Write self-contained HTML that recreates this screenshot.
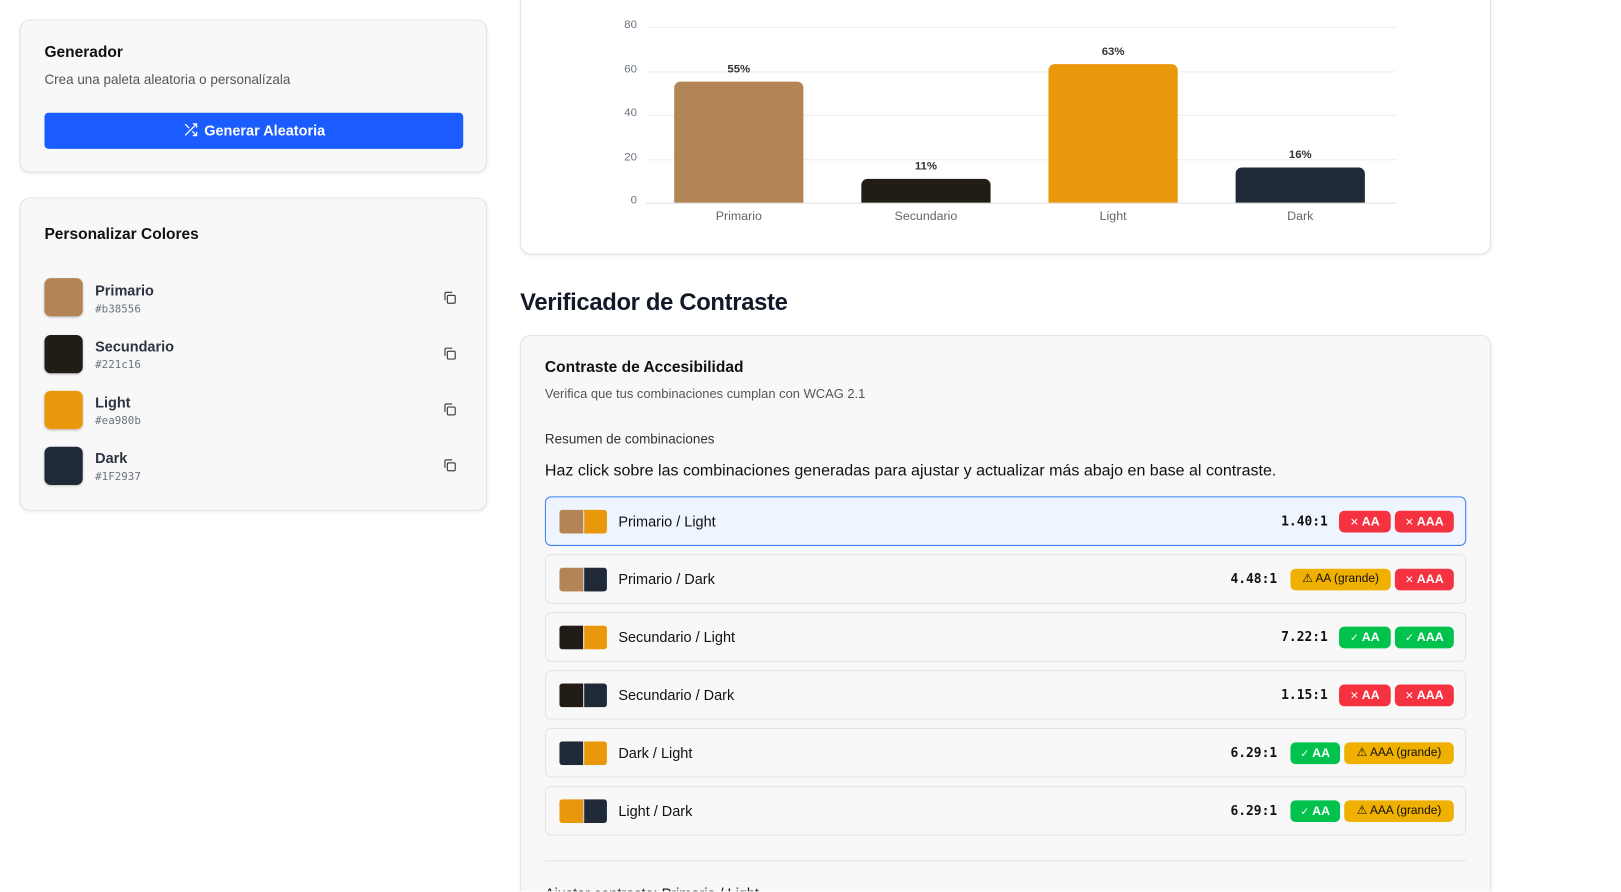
<!DOCTYPE html>
<html><head><meta charset="utf-8"><style>
html,body{margin:0;padding:0;width:1621px;height:892px;overflow:hidden;background:#fff;font-family:"Liberation Sans",sans-serif;}
#clip{position:absolute;left:0;top:0;width:1621px;height:892px;overflow:hidden;}
#w{position:absolute;left:0;top:0;width:1568px;height:862px;overflow:hidden;transform:scale(1.034);transform-origin:0 0;}
.a{position:absolute;}
.card{position:absolute;background:#f8f8f8;border:1px solid #e4e4e4;border-radius:10px;box-shadow:0 1px 3px rgba(0,0,0,.08);box-sizing:border-box;}
.t{position:absolute;white-space:nowrap;}
.sw{position:absolute;width:37px;height:37px;border-radius:6px;box-shadow:0 1px 2px rgba(0,0,0,.2);}
.nm{font-size:14px;font-weight:bold;color:#2d3340;}
.hx{font-family:"DejaVu Sans Mono",monospace;font-size:10.5px;color:#6b7280;}
.row{position:absolute;left:527px;width:891px;height:48px;box-sizing:border-box;border:1px solid #e3e3e3;border-radius:6px;background:#f8f8f8;}
.pair{position:absolute;left:13px;top:12px;width:46px;height:23px;border-radius:3px;overflow:hidden;display:flex;}
.pair span{flex:1;}
.pair span+span{border-left:1px solid #ddd;}
.lb{position:absolute;left:70px;top:15px;font-size:14px;color:#111;}
.rt{position:absolute;top:15px;font-family:"DejaVu Sans Mono",monospace;font-weight:bold;font-size:12.5px;color:#111;}
.bd{position:absolute;top:13px;height:21px;border-radius:5px;font-size:12px;line-height:21px;text-align:center;color:#fff;font-weight:bold;}
.bd i{font-style:normal;font-weight:normal;font-size:10px;margin-right:3px;}
.r{background:#f5323f;}.g{background:#00c24d;}.y{background:#f0b000;color:#111;font-weight:normal;font-size:11.5px;}
.yl{font-size:11px;color:#6b7280;text-align:right;width:20px;}
.bar{position:absolute;width:125px;border-radius:6px 6px 0 0;}
.vl{position:absolute;width:125px;text-align:center;font-size:11px;font-weight:bold;color:#333;}
.cl{position:absolute;width:125px;text-align:center;font-size:12px;color:#666;top:202px;}
</style></head><body><div id="clip"><div id="w">

<div class="card" style="left:19px;top:19px;width:452px;height:148px;">
 <div class="t" style="left:23px;top:22px;font-size:15px;font-weight:bold;color:#111;">Generador</div>
 <div class="t" style="left:23px;top:49px;font-size:13px;color:#555;">Crea una paleta aleatoria o personalízala</div>
 <div class="a" style="left:23px;top:89px;width:405px;height:35px;background:#1a5cff;border-radius:4px;color:#fff;font-size:14px;font-weight:bold;text-align:center;line-height:35px;">
  <svg width="15" height="15" viewBox="0 0 24 24" fill="none" stroke="#fff" stroke-width="2" stroke-linecap="round" stroke-linejoin="round" style="vertical-align:-2px;margin-right:6px"><path d="M16 3h5v5M4 20L21 3M21 16v5h-5M15 15l6 6M4 4l5 5"/></svg>Generar Aleatoria</div>
</div>

<div class="card" style="left:19px;top:191px;width:452px;height:303px;">
 <div class="t" style="left:23px;top:26px;font-size:15px;font-weight:bold;color:#111;">Personalizar Colores</div>
</div>
<div class="sw" style="left:43px;top:269px;background:#b38556"></div>
<div class="t nm" style="left:92px;top:273px">Primario</div><div class="t hx" style="left:92px;top:293px">#b38556</div>
<div class="sw" style="left:43px;top:324px;background:#221c16"></div>
<div class="t nm" style="left:92px;top:327px">Secundario</div><div class="t hx" style="left:92px;top:347px">#221c16</div>
<div class="sw" style="left:43px;top:378px;background:#ea980b"></div>
<div class="t nm" style="left:92px;top:381px">Light</div><div class="t hx" style="left:92px;top:401px">#ea980b</div>
<div class="sw" style="left:43px;top:432px;background:#1f2937"></div>
<div class="t nm" style="left:92px;top:435px">Dark</div><div class="t hx" style="left:92px;top:455px">#1F2937</div>
<svg class="a" style="left:428px;top:281px" width="14" height="14" viewBox="0 0 24 24" fill="none" stroke="#444" stroke-width="2"><rect x="8" y="8" width="13" height="13" rx="2"/><path d="M4 16V5a2 2 0 0 1 2-2h10"/></svg>
<svg class="a" style="left:428px;top:335px" width="14" height="14" viewBox="0 0 24 24" fill="none" stroke="#444" stroke-width="2"><rect x="8" y="8" width="13" height="13" rx="2"/><path d="M4 16V5a2 2 0 0 1 2-2h10"/></svg>
<svg class="a" style="left:428px;top:389px" width="14" height="14" viewBox="0 0 24 24" fill="none" stroke="#444" stroke-width="2"><rect x="8" y="8" width="13" height="13" rx="2"/><path d="M4 16V5a2 2 0 0 1 2-2h10"/></svg>
<svg class="a" style="left:428px;top:443px" width="14" height="14" viewBox="0 0 24 24" fill="none" stroke="#444" stroke-width="2"><rect x="8" y="8" width="13" height="13" rx="2"/><path d="M4 16V5a2 2 0 0 1 2-2h10"/></svg>

<div class="card" style="left:503px;top:-12px;width:939px;height:258px;background:#fff;"></div>
<div class="t yl" style="left:596px;top:18px">80</div>
<div class="t yl" style="left:596px;top:61px">60</div>
<div class="t yl" style="left:596px;top:103px">40</div>
<div class="t yl" style="left:596px;top:146px">20</div>
<div class="t yl" style="left:596px;top:188px">0</div>
<div class="a" style="left:625px;top:26px;width:725px;height:1px;background:#eee"></div>
<div class="a" style="left:625px;top:69px;width:725px;height:1px;background:#eee"></div>
<div class="a" style="left:625px;top:111px;width:725px;height:1px;background:#eee"></div>
<div class="a" style="left:625px;top:154px;width:725px;height:1px;background:#eee"></div>
<div class="a" style="left:625px;top:196px;width:725px;height:1px;background:#ddd"></div>
<div class="bar" style="left:652px;top:79px;height:117px;background:#b38556"></div>
<div class="bar" style="left:833px;top:173px;height:23px;background:#221c16"></div>
<div class="bar" style="left:1014px;top:62px;height:134px;background:#ea980b"></div>
<div class="bar" style="left:1195px;top:162px;height:34px;background:#1f2937"></div>
<div class="vl" style="left:652px;top:61px">55%</div>
<div class="vl" style="left:833px;top:155px">11%</div>
<div class="vl" style="left:1014px;top:44px">63%</div>
<div class="vl" style="left:1195px;top:144px">16%</div>
<div class="cl" style="left:652px">Primario</div>
<div class="cl" style="left:833px">Secundario</div>
<div class="cl" style="left:1014px">Light</div>
<div class="cl" style="left:1195px">Dark</div>

<div class="t" style="left:503px;top:279px;font-size:23px;font-weight:bold;color:#111827;letter-spacing:-0.3px">Verificador de Contraste</div>

<div class="card" style="left:503px;top:324px;width:939px;height:700px;"></div>
<div class="t" style="left:527px;top:347px;font-size:15px;font-weight:bold;color:#111">Contraste de Accesibilidad</div>
<div class="t" style="left:527px;top:374px;font-size:12.5px;color:#555">Verifica que tus combinaciones cumplan con WCAG 2.1</div>
<div class="t" style="left:527px;top:417px;font-size:13px;color:#333">Resumen de combinaciones</div>
<div class="t" style="left:527px;top:447px;font-size:15.5px;color:#111">Haz click sobre las combinaciones generadas para ajustar y actualizar más abajo en base al contraste.</div>

<div class="row" style="top:480px;background:#eef5ff;border-color:#3b82f6">
 <div class="pair"><span style="background:#b38556"></span><span style="background:#ea980b"></span></div>
 <div class="lb">Primario / Light</div><div class="rt" style="left:711px">1.40:1</div>
 <div class="bd r" style="left:767px;width:50px"><i>✕</i>AA</div><div class="bd r" style="left:821px;width:57px"><i>✕</i>AAA</div></div>
<div class="row" style="top:536px">
 <div class="pair"><span style="background:#b38556"></span><span style="background:#1f2937"></span></div>
 <div class="lb">Primario / Dark</div><div class="rt" style="left:662px">4.48:1</div>
 <div class="bd y" style="left:720px;width:97px">⚠ AA (grande)</div><div class="bd r" style="left:821px;width:57px"><i>✕</i>AAA</div></div>
<div class="row" style="top:592px">
 <div class="pair"><span style="background:#221c16"></span><span style="background:#ea980b"></span></div>
 <div class="lb">Secundario / Light</div><div class="rt" style="left:711px">7.22:1</div>
 <div class="bd g" style="left:767px;width:50px"><i>✓</i>AA</div><div class="bd g" style="left:821px;width:57px"><i>✓</i>AAA</div></div>
<div class="row" style="top:648px">
 <div class="pair"><span style="background:#221c16"></span><span style="background:#1f2937"></span></div>
 <div class="lb">Secundario / Dark</div><div class="rt" style="left:711px">1.15:1</div>
 <div class="bd r" style="left:767px;width:50px"><i>✕</i>AA</div><div class="bd r" style="left:821px;width:57px"><i>✕</i>AAA</div></div>
<div class="row" style="top:704px">
 <div class="pair"><span style="background:#1f2937"></span><span style="background:#ea980b"></span></div>
 <div class="lb">Dark / Light</div><div class="rt" style="left:662px">6.29:1</div>
 <div class="bd g" style="left:720px;width:48px"><i>✓</i>AA</div><div class="bd y" style="left:772px;width:106px">⚠ AAA (grande)</div></div>
<div class="row" style="top:760px">
 <div class="pair"><span style="background:#ea980b"></span><span style="background:#1f2937"></span></div>
 <div class="lb">Light / Dark</div><div class="rt" style="left:662px">6.29:1</div>
 <div class="bd g" style="left:720px;width:48px"><i>✓</i>AA</div><div class="bd y" style="left:772px;width:106px">⚠ AAA (grande)</div></div>

<div class="a" style="left:527px;top:832px;width:891px;height:1px;background:#e3e3e3"></div>
<div class="t" style="left:527px;top:856px;font-size:14px;color:#111">Ajustar contraste: Primario / Light</div>
</div></div></body></html>
